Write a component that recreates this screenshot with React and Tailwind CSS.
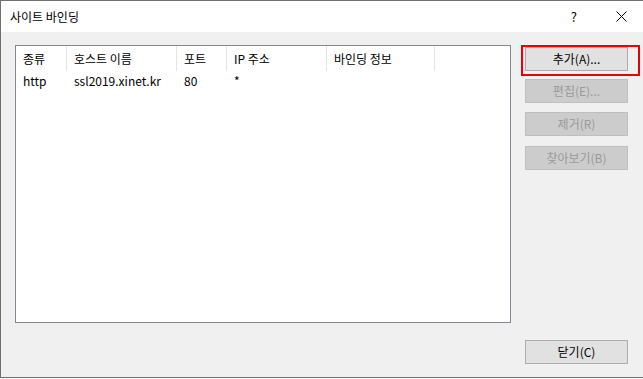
import React from 'react'

const font = { fontFamily: '"Noto Sans CJK KR", "Noto Sans", sans-serif' }

const columns = [
  { label: '종류', w: 'w-[51px]' },
  { label: '호스트 이름', w: 'w-[110px]' },
  { label: '포트', w: 'w-[50px]' },
  { label: 'IP 주소', w: 'w-[100px]' },
  { label: '바인딩 정보', w: 'w-[108px]' },
]

const rows = [['http', 'ssl2019.xinet.kr', '80', '*', '']]

function Button({ children, disabled }) {
  return (
    <div
      className={
        'w-[103px] h-[24px] flex items-center justify-center text-[12px] border ' +
        (disabled
          ? 'bg-[#cccccc] border-[#bfbfbf] text-[#9a9a9a]'
          : 'bg-[#e1e1e1] border-[#adadad] text-[#000]')
      }
    >
      {children}
    </div>
  )
}

export default function App() {
  return (
    <div className="w-[643px] h-[379px] bg-white overflow-hidden" style={font}>
      <div className="w-[650px] h-[378px] border-l border-t border-b border-[#6f6f6f] flex flex-col">
        {/* title bar */}
        <div className="h-[31px] bg-white flex items-center text-[12px] text-black">
          <span className="pl-[9px]">사이트 바인딩</span>
          <span className="ml-auto mr-[39px] text-[13px]">?</span>
          <svg width="11" height="11" viewBox="0 0 11 11" className="mr-[23px]">
            <path d="M0.5 0.5 L10.5 10.5 M10.5 0.5 L0.5 10.5" stroke="#000" strokeWidth="1" />
          </svg>
        </div>

        {/* body */}
        <div className="flex-1 bg-[#f0f0f0] flex pl-[14px] pt-[13px] pb-[13px]">
          <div className="w-[496px] h-[278px] bg-white border border-[#828790] text-[12px] text-black">
            <div className="flex h-[25px]">
              {columns.map(c => (
                <div key={c.label} className={`${c.w} border-r border-[#e5e5e5] pl-[7px] flex items-center`}>
                  {c.label}
                </div>
              ))}
            </div>
            {rows.map((r, i) => (
              <div key={i} className="flex h-[19px]">
                {r.map((cell, j) => (
                  <div key={j} className={`${columns[j].w} pl-[7px] flex items-center`}>
                    {cell}
                  </div>
                ))}
              </div>
            ))}
          </div>

          <div className="ml-[14px] flex flex-col">
            <div className="relative mt-[2px]">
              <Button>추가(A)...</Button>
              <div className="absolute left-[-4px] top-[-2px] w-[119px] h-[31px] border-2 border-[#e8000b]" />
            </div>
            <div className="mt-[8px]">
              <Button disabled>편집(E)...</Button>
            </div>
            <div className="mt-[9px]">
              <Button disabled>제거(R)</Button>
            </div>
            <div className="mt-[10px]">
              <Button disabled>찾아보기(B)</Button>
            </div>
            <div className="mt-auto">
              <Button>닫기(C)</Button>
            </div>
          </div>
        </div>
      </div>
    </div>
  )
}
